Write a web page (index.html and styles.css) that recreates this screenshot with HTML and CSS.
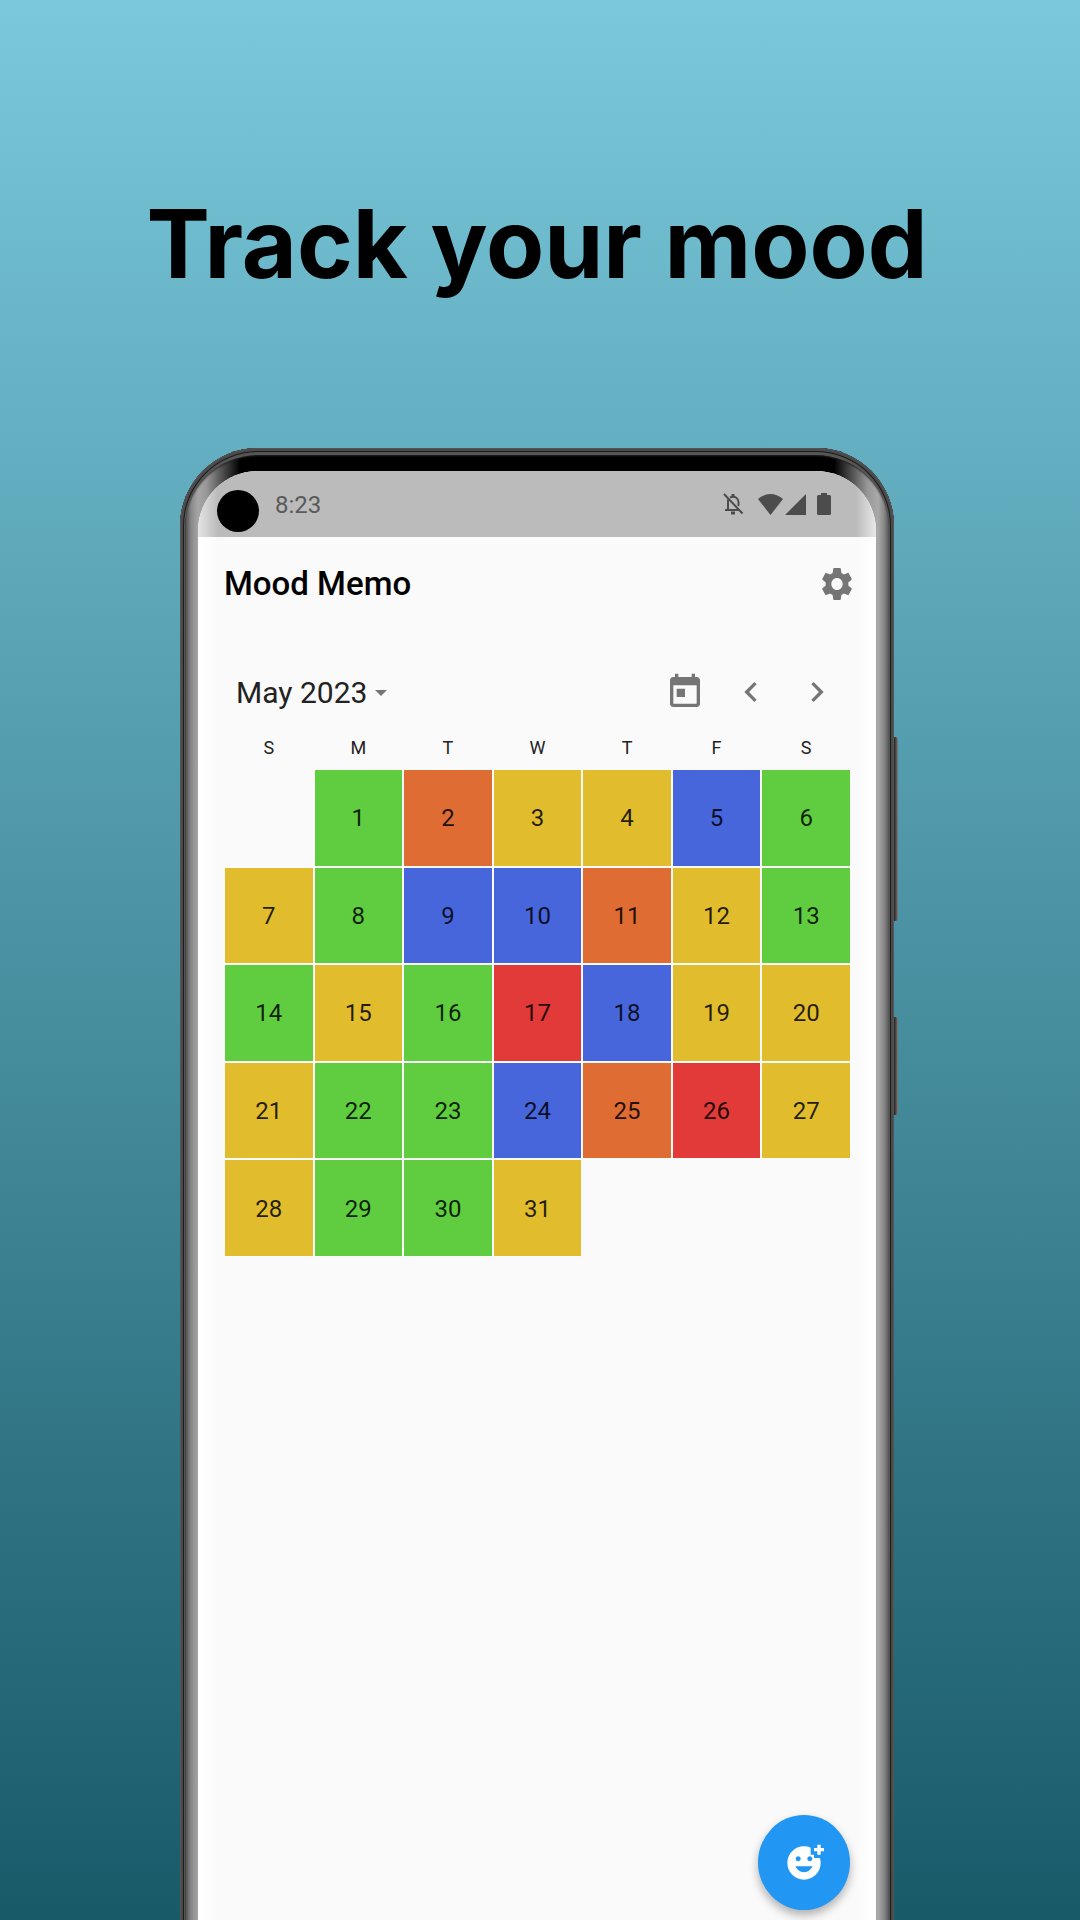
FILE: index.html
```html
<!DOCTYPE html>
<html lang="en">
<head>
<meta charset="utf-8">
<meta name="viewport" content="width=device-width, initial-scale=1">
<title>Mood Memo</title>
<link rel="stylesheet" href="styles.css">
</head>
<body>
<main class="promo">
  <h1 class="headline">Track your mood</h1>
  <section class="phone">
    <span class="side-key volume"></span>
    <span class="side-key power"></span>
    <div class="screen">
      <div class="status">
        <span class="camera"></span>
        <span class="clock">8:23</span>
        <svg class="bell" viewBox="0 0 22 22" fill="none" stroke="currentColor" stroke-width="2"><path d="M2 1 20.500 20.500M6 6.500V16M3 17H16M8 4.500C13 2 17 6 16.500 10V13"/><path d="M11 1V4M9 20h4" stroke-width="3"/></svg>
        <svg class="wifi" viewBox="0 0 25 21" fill="currentColor"><path d="M0 5Q12.500-5 25 5L12.500 21z"/></svg>
        <svg class="signal" viewBox="0 0 21 21" fill="currentColor"><path d="M21 0V21H0z"/></svg>
        <svg class="battery" viewBox="0 0 14 22" fill="currentColor"><path d="M4 0h6v2h2.500q1.500 0 1.500 1.500v17q0 1.500-1.500 1.500h-11q-1.500 0-1.500-1.500v-17q0-1.500 1.500-1.500H4z"/></svg>
      </div>
      <header class="appbar">
        <h2 class="title">Mood Memo</h2>
        <button class="icon-button settings" aria-label="Settings"><svg viewBox="0 0 24 24" preserveAspectRatio="none"><path d="M19.14 12.94c.04-.3.06-.61.06-.94 0-.32-.02-.64-.07-.94l2.030-1.580c.18-.14.23-.41.12-.61l-1.920-3.320c-.12-.22-.37-.29-.59-.22l-2.390.96c-.5-.38-1.030-.7-1.620-.94l-.36-2.540c-.04-.24-.24-.41-.48-.41h-3.840c-.24 0-.43.17-.47.41l-.36 2.540c-.59.24-1.130.57-1.620.94l-2.390-.96c-.22-.08-.47 0-.59.22L2.740 8.870c-.12.21-.08.47.12.61l2.030 1.580c-.05.3-.09.63-.09.94s.02.64.07.94l-2.030 1.580c-.18.14-.23.41-.12.61l1.920 3.320c.12.22.37.29.59.22l2.390-.96c.5.38 1.030.7 1.620.94l.36 2.540c.05.24.24.41.48.41h3.840c.24 0 .44-.17.47-.41l.36-2.540c.59-.24 1.130-.56 1.620-.94l2.390.96c.22.08.47 0 .59-.22l1.920-3.320c.12-.22.07-.47-.12-.61l-2.010-1.580zM12 15.600c-1.980 0-3.600-1.620-3.600-3.600s1.620-3.600 3.600-3.600 3.600 1.620 3.600 3.600-1.620 3.600-3.600 3.600z"/></svg></button>
      </header>
      <div class="toolbar">
        <button class="month">May 2023 <svg class="caret" viewBox="0 0 12 6"><path d="M0 0H12L6 6z"/></svg></button>
        <button class="icon-button" aria-label="Today"><svg viewBox="0 0 24 24"><path d="M19 3h-1V1h-2v2H8V1H6v2H5c-1.110 0-1.990.9-1.990 2L3 19c0 1.100.89 2 2 2h14c1.100 0 2-.9 2-2V5c0-1.100-.9-2-2-2zm0 16H5V8h14v11zM7 10h5v5H7z"/></svg></button>
        <button class="icon-button" aria-label="Previous month"><svg viewBox="0 0 24 24"><path d="M15.410 7.410 14 6l-6 6 6 6 1.410-1.410L10.830 12z"/></svg></button>
        <button class="icon-button" aria-label="Next month"><svg viewBox="0 0 24 24"><path d="M10 6 8.590 7.410 13.170 12l-4.580 4.590L10 18l6-6z"/></svg></button>
      </div>
      <table class="calendar">
        <thead>
          <tr><th>S</th><th>M</th><th>T</th><th>W</th><th>T</th><th>F</th><th>S</th></tr>
        </thead>
        <tbody>
          <tr><td></td><td class="good">1</td><td class="low">2</td><td class="okay">3</td><td class="okay">4</td><td class="blue">5</td><td class="good">6</td></tr>
          <tr><td class="okay">7</td><td class="good">8</td><td class="blue">9</td><td class="blue">10</td><td class="low">11</td><td class="okay">12</td><td class="good">13</td></tr>
          <tr><td class="good">14</td><td class="okay">15</td><td class="good">16</td><td class="bad">17</td><td class="blue">18</td><td class="okay">19</td><td class="okay">20</td></tr>
          <tr><td class="okay">21</td><td class="good">22</td><td class="good">23</td><td class="blue">24</td><td class="low">25</td><td class="bad">26</td><td class="okay">27</td></tr>
          <tr><td class="okay">28</td><td class="good">29</td><td class="good">30</td><td class="okay">31</td><td></td><td></td><td></td></tr>
        </tbody>
      </table>
      <button class="fab" aria-label="Add mood"><svg viewBox="0 0 24 24"><path d="M18 9V7h-2V2.840C14.770 2.300 13.420 2 11.990 2 6.470 2 2 6.480 2 12s4.470 10 9.990 10C17.520 22 22 17.520 22 12c0-1.050-.17-2.050-.47-3H18zM15.500 8c.83 0 1.500.67 1.500 1.500s-.67 1.500-1.500 1.500-1.500-.67-1.500-1.500S14.670 8 15.500 8zM8.500 8c.83 0 1.500.67 1.500 1.500S9.330 11 8.500 11 7 10.330 7 9.500 7.670 8 8.500 8zM12 17.500c-2.330 0-4.310-1.460-5.110-3.500h10.220c-.8 2.040-2.780 3.500-5.110 3.500zM22 3h2v2h-2v2h-2V5h-2V3h2V1h2v2z"/></svg></button>
    </div>
  </section>
</main>
</body>
</html>
```
FILE: styles.css
```css
* {
  box-sizing: border-box;
}

body {
  margin: 0;
  font-family: Roboto, "Liberation Sans", sans-serif;
  color: #222;
}

button {
  border: 0;
  padding: 0;
  background: none;
  font: inherit;
  color: inherit;
  cursor: pointer;
}

svg {
  display: block;
  flex: none;
}

.promo {
  display: flex;
  flex-direction: column;
  min-height: 100vh;
  padding: 184px 186px 0 180px;
  overflow: hidden;
  background: linear-gradient(#7ac8db, #195a69);
}

.headline {
  margin: 0 -80px 144px;
  font: 700 95px/120px Inter, "Liberation Sans", sans-serif;
  color: #000;
  text-align: center;
  white-space: nowrap;
}

/* Phone body: metal sides that darken to black along the top edge.
   The lower end runs past the page so that its rim is cut off. */
.phone {
  position: relative;
  flex: 1;
  display: flex;
  margin-bottom: -10px;
  padding: 23px 18px 0;
  border-radius: 78px 78px 0 0;
  background: linear-gradient(90deg, #777 0, #666 3px, #222 4px, #555 6px, #888 11px, #a5a5a5 18px, #999 26px, #000 60px, #000 calc(100% - 60px), #999 calc(100% - 26px), #a9a9a9 calc(100% - 16px), #888 calc(100% - 10px), #555 calc(100% - 5px), #222 calc(100% - 4px), #666 calc(100% - 3px), #777 100%);
  box-shadow: inset 0 0 0 1px #555, inset 0 0 0 3px #4a4a4a, inset 0 0 0 4px #1c1c1c, inset 0 2px 0 5px #555, inset 0 4px 2px 4px #222;
}

.side-key {
  position: absolute;
  left: 100%;
  width: 4px;
  border-radius: 0 3px 3px 0;
  background: linear-gradient(90deg, #222, #555 60%, #887d7d);
}

.volume {
  top: 289px;
  height: 184px;
}

.power {
  top: 569px;
  height: 98px;
}

.screen {
  position: relative;
  flex: 1;
  min-width: 0;
  padding-bottom: 130px;
  border-radius: 60px 60px 0 0;
  overflow: hidden;
  background: linear-gradient(90deg, #fff 4px, #fafafa 20px, #fafafa calc(100% - 20px), #fff calc(100% - 4px));
}

.status {
  display: flex;
  align-items: center;
  height: 66px;
  padding: 0 45px 0 19px;
  background: linear-gradient(90deg, #e4e4e4, #bbb 20px, #bbb calc(100% - 20px), #e8e8e8);
  color: #4c4c4c;
}

.camera {
  width: 42px;
  height: 42px;
  margin: 14px 16px 0 0;
  border-radius: 50%;
  background: #000;
}

.clock {
  flex: 1;
  padding-top: 2px;
  font-size: 24px;
  line-height: 28px;
  color: #5a5a5a;
}

.bell {
  width: 22px;
  height: 22px;
  margin-right: 14px;
}

.wifi {
  width: 25px;
  height: 21px;
  margin-right: 2px;
}

.signal {
  width: 21px;
  height: 21px;
  margin-right: 11px;
}

.battery {
  width: 14px;
  height: 22px;
}

.appbar {
  display: flex;
  align-items: center;
  justify-content: space-between;
  height: 94px;
  padding: 0 20px 0 26px;
}

.title {
  margin: 0;
  font-size: 33px;
  font-weight: 500;
  line-height: 40px;
  color: #000;
}

.icon-button {
  display: flex;
  align-items: center;
  justify-content: center;
  width: 66px;
  height: 40px;
}

.icon-button svg {
  width: 40px;
  height: 40px;
  fill: #757575;
}

.settings,
.settings svg {
  width: 38px;
}

.toolbar {
  display: flex;
  align-items: center;
  height: 42px;
  margin: 40px 26px 0 38px;
}

.month {
  display: flex;
  align-items: center;
  gap: 8px;
  margin-right: auto;
  padding-top: 2px;
  font-size: 30px;
  line-height: 40px;
}

.caret {
  width: 12px;
  height: 6px;
  fill: #757575;
}

.calendar {
  width: calc(100% - 49px);
  height: 545px;
  margin: 0 24px 0 25px;
  border-collapse: separate;
  border-spacing: 2px;
  table-layout: fixed;
  text-align: center;
}

.calendar th {
  height: 53px;
  padding: 12px 0 0;
  font-size: 18px;
  font-weight: 400;
  line-height: 20px;
}

.calendar td {
  padding: 1px 0 0;
  font-size: 24px;
  line-height: 28px;
  color: rgba(0, 0, 0, 0.85);
}

.good {
  background: #5fcd3f;
}

.okay {
  background: #e1bd2d;
}

.low {
  background: #de6c33;
}

.blue {
  background: #4866dc;
}

.bad {
  background: #e13a39;
}

.fab {
  position: absolute;
  right: 26px;
  bottom: 20px;
  display: grid;
  place-items: center;
  width: 92px;
  height: 95px;
  border-radius: 50%;
  background: #2196f3;
  box-shadow: 0 5px 10px rgba(0, 0, 0, 0.3);
}

.fab svg {
  width: 40px;
  height: 40px;
  fill: #fff;
}
```
